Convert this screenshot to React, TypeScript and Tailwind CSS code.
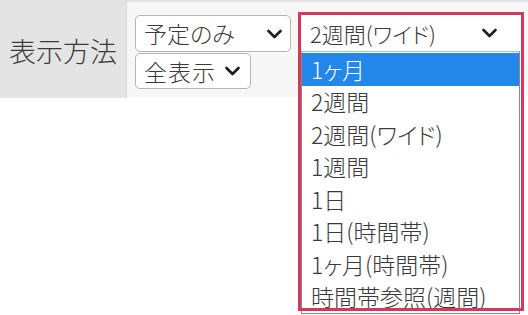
import React from "react";

const options = [
    "1ヶ月",
    "2週間",
    "2週間(ワイド)",
    "1週間",
    "1日",
    "1日(時間帯)",
    "1ヶ月(時間帯)",
    "時間帯参照(週間)",
];

function Chevron() {
    return (
        <svg width="15" height="10" viewBox="0 0 15 10" fill="none" className="shrink-0">
            <polyline points="1.5,2 7.5,8 13.5,2" stroke="#1f1f1f" strokeWidth="2.6" strokeLinecap="round" strokeLinejoin="round" />
        </svg>
    );
}

function SelectBox({ label, width, height, pr, track }: { label: string; width: string; height: string; pr: string; track?: boolean }) {
    return (
        <div className={`${width} ${height} ${pr} flex items-center bg-white border border-[#b5b5b5] rounded-[5px] pl-[8px]`}>
            <span className={`text-[23px] leading-none text-[#3a3a3a] whitespace-nowrap ${track ? "tracking-[1px]" : ""}`}>{label}</span>
            <span className="ml-auto flex">
                <Chevron />
            </span>
        </div>
    );
}

export default function App() {
    return (
        <div
            className="w-[528px] h-[315px] bg-white overflow-hidden font-light [font-feature-settings:'palt']"
            style={{ fontFamily: '"Noto Sans CJK JP", "Noto Sans", sans-serif' }}
        >
            <div className="flex h-[98px] border-t-[2px] border-[#e2e2e2]">
                <div className="w-[127px] h-[96px] bg-[#e4e4e4] border-r border-[#d8d8d8] flex items-center justify-center">
                    <span className="text-[27px] leading-none text-[#3a3a3a]">表示方法</span>
                </div>
                <div className="flex-1 h-[95px] bg-[#f7f7f7] flex items-start">
                    <div className="flex flex-col items-start gap-[1px] ml-[8px] mt-[13px]">
                        {/* 絞り込み */}
                        <SelectBox label="予定のみ" width="w-[156px]" height="h-[37px]" pr="pr-[8px]" />
                        <SelectBox label="全表示" width="w-[116px]" height="h-[36px]" pr="pr-[10px]" track />
                    </div>
                    <div className="relative w-[226px] mt-[10px] ml-[7px] pt-[3px] px-[3px] shrink-0">
                        <div className="h-[36px] bg-white flex items-center justify-between pl-[9px] pr-[24px]">
                            <span className="text-[22px] leading-none text-[#3a3a3a]">2週間(ワイド)</span>
                            <Chevron />
                        </div>
                        <div className="bg-white border border-[#8a8a8a] border-t-[#9cc9cf] w-[219px] pt-[1px]">
                            {options.map((o, i) => (
                                <div
                                    key={o}
                                    className={`h-[32.5px] flex items-center pl-[9px] text-[23px] leading-none ${i === 0 ? "bg-[#2287e8] text-white" : "text-[#3a3a3a]"}`}
                                >
                                    {o}
                                </div>
                            ))}
                        </div>
                        <div className="absolute left-0 top-0 w-[226px] h-[299px] border-[3px] border-[#d5385d] pointer-events-none" />
                    </div>
                </div>
            </div>
        </div>
    );
}
